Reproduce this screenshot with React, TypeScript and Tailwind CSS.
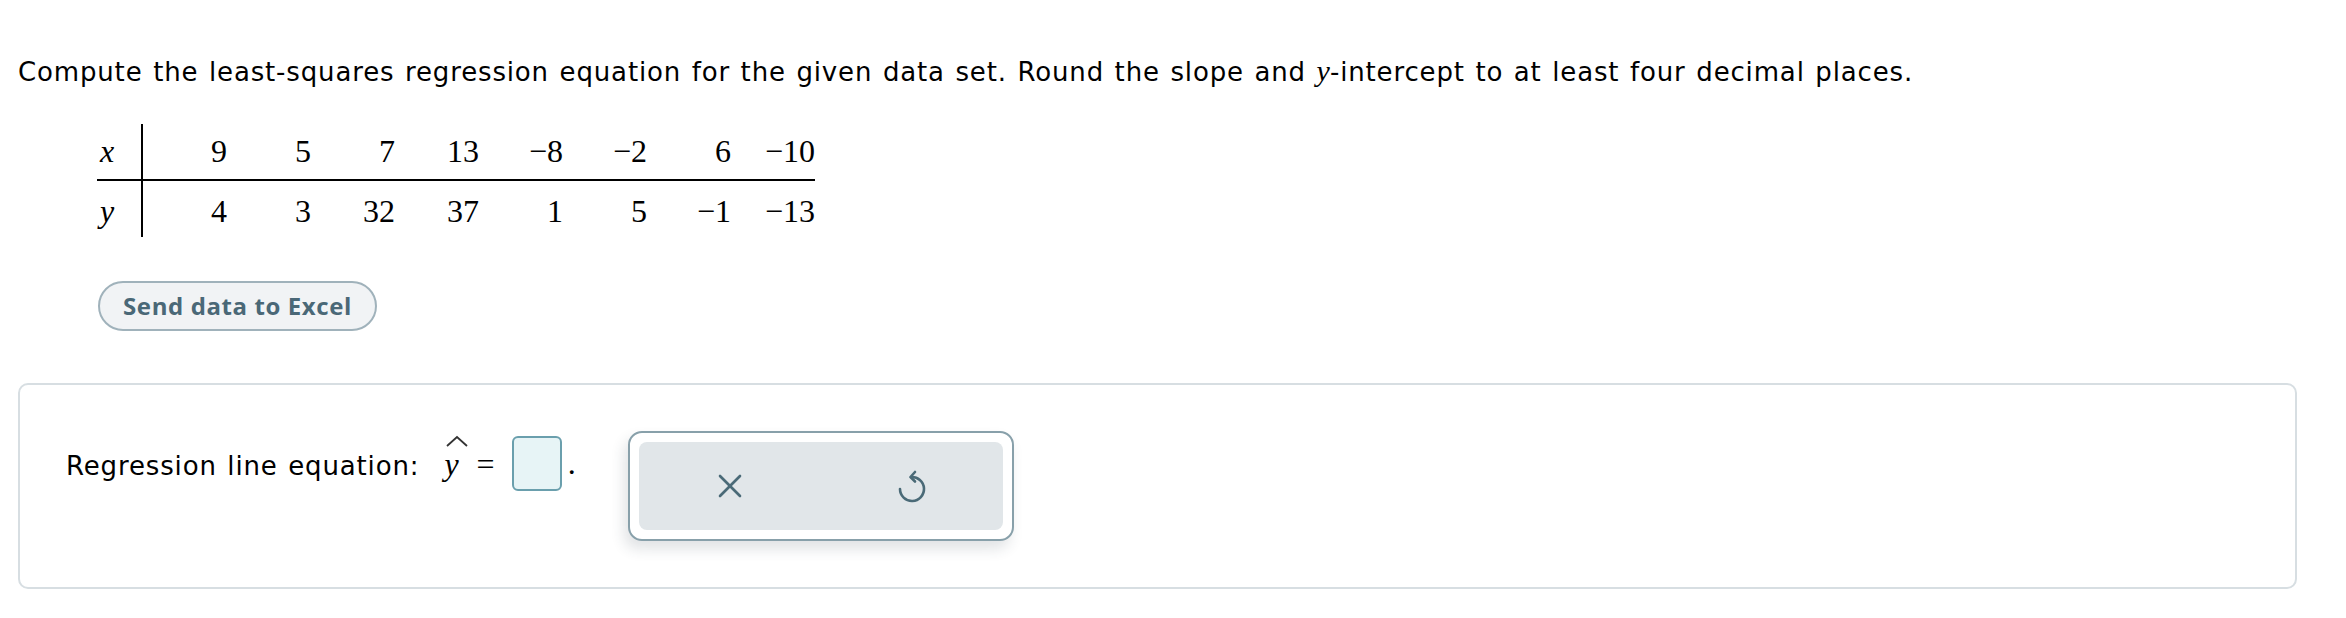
import React from "react";

const xs = ["9", "5", "7", "13", "−8", "−2", "6", "−10"];
const ys = ["4", "3", "32", "37", "1", "5", "−1", "−13"];

function XIcon() {
  return (
    <svg width="24" height="24" viewBox="0 0 24 24" fill="none" stroke="#4a6a77" strokeWidth="2.6" strokeLinecap="round">
      <path d="M2 2 L22 22" />
      <path d="M22 2 L2 22" />
    </svg>
  );
}

function UndoIcon() {
  return (
    <svg width="30" height="34" viewBox="0 0 30 34" fill="none" stroke="#4a6a77" strokeWidth="2.6" strokeLinecap="round" strokeLinejoin="round">
      <path d="M14 8 A12 12 0 1 1 3 20" />
      <path d="M18 3 L13.5 8 L18 12.5" />
    </svg>
  );
}

export default function App() {
  return (
    <div className="min-h-screen bg-white pl-[18px] pr-[49px] pt-[53px] font-['DejaVu_Sans',sans-serif] text-[26px] tracking-[0.85px] [word-spacing:1.5px] text-black">
      {/* enonce */}
      <p className="leading-[36px] whitespace-nowrap">
        Compute the least-squares regression equation for the given data set. Round the slope and{" "}
        <span className="font-['Liberation_Serif',serif] italic text-[30px] tracking-normal">y</span>-intercept to at least four decimal places.
      </p>

      {/* tableau */}
      <div className="mt-[34px] ml-[79px] font-['Liberation_Serif',serif] text-[32px] tracking-normal [word-spacing:0px]">
        <div className="flex h-[57px] w-[718px] border-b-2 border-black">
          <div className="w-[46px] border-r-2 border-black pl-[3px] italic leading-[55px]">x</div>
          {xs.map((v, i) => (
            <div key={i} className="w-[84px] text-right leading-[55px]">{v}</div>
          ))}
        </div>
        <div className="flex h-[56px] w-[718px]">
          <div className="w-[46px] border-r-2 border-black pl-[3px] italic leading-[60px]">y</div>
          {ys.map((v, i) => (
            <div key={i} className="w-[84px] text-right leading-[60px]">{v}</div>
          ))}
        </div>
      </div>

      <button className="mt-[44px] ml-[80px] flex h-[50px] w-[279px] items-center justify-center rounded-full border-2 border-[#a0b2bb] bg-[#f1f3f5] font-['Open_Sans',sans-serif] text-[24px] font-bold tracking-[0.6px] [word-spacing:0px] text-[#4a6877]">
        Send data to Excel
      </button>

      {/* reponse */}
      <div className="mt-[52px] flex h-[206px] items-center rounded-[10px] border-2 border-[#d7dee2] pl-[46px]">
        <div className="flex h-[55px] items-center self-start mt-[51px]">
          <span className="mt-[6px] whitespace-nowrap">Regression line equation:</span>
          <span className="relative ml-[25px] font-['Liberation_Serif',serif] text-[32px] italic leading-none tracking-normal">
            y
            <svg className="absolute left-[1px] top-[-14px]" width="24" height="14" viewBox="0 0 24 14" fill="none" stroke="#333" strokeWidth="1.8">
              <path d="M2 12 L12 3 L22 12" />
            </svg>
          </span>
          <span className="ml-[18px] font-['Liberation_Serif',serif] text-[32px] leading-none tracking-normal">=</span>
          <div className="ml-[17px] h-[55px] w-[50px] rounded-[6px] border-2 border-[#6a9fad] bg-[#e7f4f6]" />
          <span className="ml-[6px] self-end mb-[12px] font-['Liberation_Serif',serif] text-[32px] leading-none">.</span>
        </div>

        <div className="ml-[51px] h-[110px] w-[386px] rounded-[14px] border-2 border-[#88a0aa] bg-white p-[9px] shadow-[-4px_8px_14px_rgba(40,60,70,0.14)]">
          <div className="grid h-full grid-cols-2 place-items-center rounded-[8px] bg-[#e1e6e9]">
            <XIcon />
            <UndoIcon />
          </div>
        </div>
      </div>
    </div>
  );
}
